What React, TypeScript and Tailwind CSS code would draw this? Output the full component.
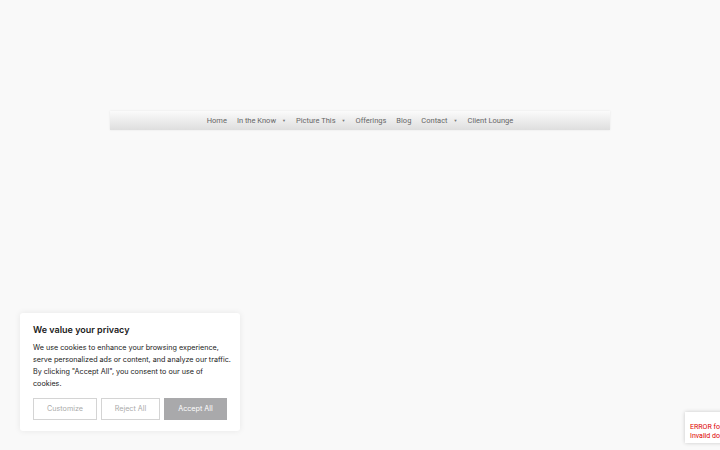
import React from "react";

const NAV: Array<{ label: string; caret?: boolean }> = [
  { label: "Home" },
  { label: "In the Know", caret: true },
  { label: "Picture This", caret: true },
  { label: "Offerings" },
  { label: "Blog" },
  { label: "Contact", caret: true },
  { label: "Client Lounge" },
];

export default function App() {
  return (
    <div className="relative w-[720px] h-[450px] overflow-hidden bg-[#f9f9f9]">
      <div className="pt-[111px] flex justify-center">
        <nav
          className="w-[500px] h-[19px] flex items-center justify-center bg-gradient-to-b from-[#fbfbfb] to-[#dedede] shadow-[0_0_2px_rgba(0,0,0,0.08)]"
          style={{ fontFamily: "Roboto, sans-serif" }}
        >
          <ul className="flex items-center gap-[10px] text-[7.5px] text-[#666]">
            {NAV.map((n) => (
              <li key={n.label} className="flex items-center">
                <span>{n.label}</span>
                {n.caret && (
                  <span className="ml-[6px] text-[4px] text-[#777]">▼</span>
                )}
              </li>
            ))}
          </ul>
        </nav>
      </div>

      {/* cookie notice */}
      <div
        className="absolute left-[20px] top-[313px] w-[220px] bg-white rounded-[3px] shadow-[0_0_6px_rgba(0,0,0,0.08)] px-[13px] pt-[11px] pb-[11px]"
        style={{ fontFamily: "Inter, sans-serif" }}
      >
        <h2 className="text-[9px] font-semibold text-[#212121] leading-[12px]">
          We value your privacy
        </h2>
        <p className="mt-[6px] text-[7.2px] leading-[12px] text-[#212121] whitespace-nowrap">
          We use cookies to enhance your browsing experience,
          <br />
          serve personalized ads or content, and analyze our traffic.
          <br />
          By clicking "Accept All", you consent to our use of
          <br />
          cookies.
        </p>
        <div className="mt-[8px] flex gap-[4px]">
          <button className="w-[64px] h-[22px] border border-[#d4d4d4] text-[7.2px] text-[#aaa] bg-white">
            Customize
          </button>
          <button className="w-[59px] h-[22px] border border-[#d4d4d4] text-[7.2px] text-[#aaa] bg-white">
            Reject All
          </button>
          <button className="w-[63px] h-[22px] border border-[#a9a9ab] text-[7.2px] text-white bg-[#a9a9ab]">
            Accept All
          </button>
        </div>
      </div>

      {/* recaptcha badge */}
      <div
        className="absolute left-[685px] top-[412px] w-[70px] h-[31px] bg-white shadow-[0_0_4px_rgba(0,0,0,0.2)] pl-[5px] pt-[11px] text-[7px] leading-[9px] text-[#d00] whitespace-nowrap"
        style={{ fontFamily: "Roboto, sans-serif" }}
      >
        <div>ERROR for</div>
        <div>Invalid do</div>
      </div>
    </div>
  );
}
